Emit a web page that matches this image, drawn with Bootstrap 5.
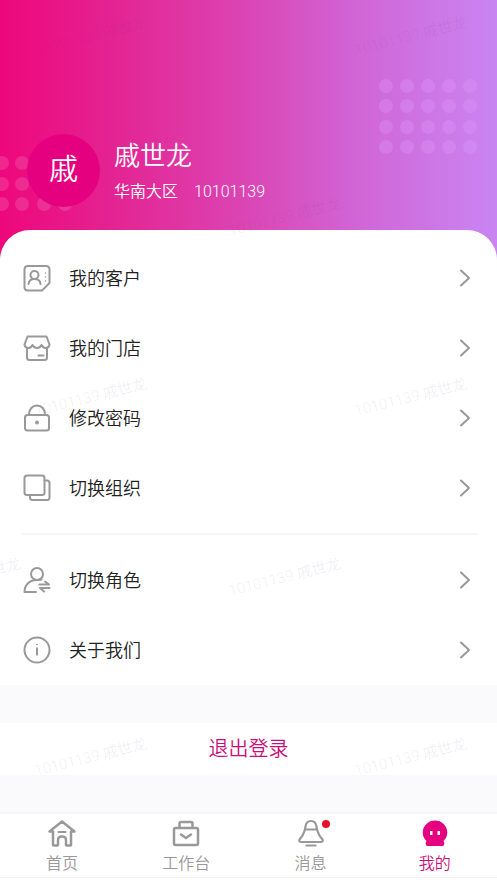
<!DOCTYPE html>
<html lang="zh-CN">
<head>
<meta charset="utf-8">
<meta name="viewport" content="width=device-width, initial-scale=1">
<title>我的</title>
<link href="https://cdn.jsdelivr.net/npm/bootstrap@5.3.0/dist/css/bootstrap.min.css" rel="stylesheet">
<style>
  :root { --brand: #e5007f; --line-icon: #999; }
  body { font-family: Roboto, "Noto Sans CJK SC", sans-serif; font-weight: 350; background: #fafafc; color: #333; }
  svg { display: block; flex: none; }
  .stroke-icon { fill: none; stroke: var(--line-icon); stroke-width: 2; stroke-linejoin: round; stroke-linecap: round; }
  .hero { background: linear-gradient(90deg, #ee077c 0%, #e5208f 20%, #dc43b2 48%, #d165d6 72%, #c985f2 100%); padding: 134px 27px 56px; }
  .dots { fill: #fff; fill-opacity: .13; }
  .dots-left { left: -5px; top: 156px; }
  .dots-right { right: 19px; top: 78px; fill: #e09cff; fill-opacity: .3; }
  .avatar { width: 73px; height: 73px; background: var(--brand); font-size: 29px; }
  .profile { margin-left: 14px; gap: 6px; }
  .profile-name { font-size: 26px; line-height: 36px; font-weight: 350; }
  .profile-info { font-size: 16px; line-height: 24px; gap: 16px; }
  .panel { border-radius: 30px 30px 0 0; margin-top: -33px; padding-top: 13px; }
  .menu-row { height: 70px; padding: 0 26px 0 23px; gap: 18px; font-size: 18px; color: #222; text-decoration: none; }
  .divider { height: 2px; margin: 10px 19px 10px 22px; background: #f5f5f6; }
  .logout { height: 52px; margin-top: 38px; font-size: 20px; font-weight: 350; color: #c8107a; }
  .tabs { border-top: 2px solid #f6f6f7; padding: 5px 0 1px; }
  .tab-link { font-size: 16px; line-height: 24px; gap: 5px; color: #999; text-decoration: none; }
  .tab-link.current { color: #c8107a; }
  .foot-strip { height: 6px; border-top: 1px solid #f3f3f4; }
  .unread { width: 8px; height: 8px; background: #e8112d; top: 1px; right: -5px; }
  .watermark { font-size: 15px; fill: #3c3c78; fill-opacity: .09; pointer-events: none; }
</style>
<script src="https://cdn.jsdelivr.net/npm/bootstrap@5.3.0/dist/js/bootstrap.bundle.min.js"></script>
</head>
<body>
<div class="position-relative overflow-hidden min-vh-100 d-flex flex-column">
  <header class="hero position-relative text-white">
    <svg class="dots dots-left position-absolute" width="78" height="56" aria-hidden="true">
      <g id="dot-row"><circle cx="7" cy="7" r="7"/><circle cx="27" cy="7" r="7"/><circle cx="49" cy="7" r="7"/><circle cx="70" cy="7" r="7"/></g>
      <use href="#dot-row" y="21"/><use href="#dot-row" y="41"/>
    </svg>
    <svg class="dots dots-right position-absolute" width="100" height="78" aria-hidden="true">
      <g id="dot-line"><circle cx="8" cy="8" r="7"/><circle cx="29" cy="8" r="7"/><circle cx="50" cy="8" r="7"/><circle cx="71" cy="8" r="7"/><circle cx="92" cy="8" r="7"/></g>
      <use href="#dot-line" y="20"/><use href="#dot-line" y="41"/><use href="#dot-line" y="61"/>
    </svg>
    <div class="d-flex align-items-center position-relative">
      <div class="avatar rounded-circle d-flex align-items-center justify-content-center">戚</div>
      <div class="profile d-flex flex-column">
        <h1 class="profile-name m-0">戚世龙</h1>
        <div class="profile-info d-flex"><span>华南大区</span><span>10101139</span></div>
      </div>
    </div>
  </header>

  <main>
    <nav class="panel bg-white position-relative" aria-label="菜单">
      <a class="menu-row d-flex align-items-center" href="#customers">
        <svg class="stroke-icon" width="28" height="28" viewBox="0 0 28 28"><path d="M5 2h18q3.500 0 3.500 3.500v13.500l-7.500 7.500H5q-3.500 0-3.500-3.500V5.500Q1.500 2 5 2z"/><circle cx="11.500" cy="11" r="4"/><path d="M5.500 20q.5-5 6-5t6 5"/><path d="M22.500 9v.1M22.500 13v.1M22.500 17v.1" stroke-width="1.500"/></svg>
        <span class="flex-grow-1">我的客户</span>
        <svg class="stroke-icon" width="12" height="18" viewBox="0 0 12 18"><path d="M2 1.500 10 9l-8 7.500"/></svg>
      </a>
      <a class="menu-row d-flex align-items-center" href="#stores">
        <svg class="stroke-icon" width="28" height="28" viewBox="0 0 28 28"><path d="M4.500 2.500h19l3 8q-.5 3.500-4 3.500-2.500 0-4-3-1.500 3-4.500 3t-4.500-3q-1.500 3-4 3-3.500 0-4-3.500z"/><path d="M4 14v9.500q0 2.500 2.500 2.500h15q2.500 0 2.500-2.500V14M15.500 21.500h5"/></svg>
        <span class="flex-grow-1">我的门店</span>
        <svg class="stroke-icon" width="12" height="18" viewBox="0 0 12 18"><path d="M2 1.500 10 9l-8 7.500"/></svg>
      </a>
      <a class="menu-row d-flex align-items-center" href="#password">
        <svg class="stroke-icon" width="28" height="28" viewBox="0 0 28 28"><rect x="2" y="11" width="24" height="15.500" rx="2.500"/><path d="M6 11C6 5 9.500 1.500 14 1.500S22 5 22 11"/><circle cx="14" cy="18.500" r="1.200" fill="#999" stroke-width="1.500"/></svg>
        <span class="flex-grow-1">修改密码</span>
        <svg class="stroke-icon" width="12" height="18" viewBox="0 0 12 18"><path d="M2 1.500 10 9l-8 7.500"/></svg>
      </a>
      <a class="menu-row d-flex align-items-center" href="#organization">
        <svg class="stroke-icon" width="28" height="28" viewBox="0 0 28 28"><rect x="1.500" y="1.500" width="20" height="19.500" rx="2.500"/><path d="M21.500 6.500H24q2.500 0 2.500 2.500v14.500q0 2.500-2.500 2.500H9.500Q7 26 7 23.500V21"/></svg>
        <span class="flex-grow-1">切换组织</span>
        <svg class="stroke-icon" width="12" height="18" viewBox="0 0 12 18"><path d="M2 1.500 10 9l-8 7.500"/></svg>
      </a>
      <div class="divider"></div>
      <a class="menu-row d-flex align-items-center" href="#role">
        <svg class="stroke-icon" width="28" height="28" viewBox="0 0 28 28"><circle cx="14" cy="8" r="6"/><path d="M18.500 13.500Q16.500 14 14 14C6.500 14 1.500 18.500 1.500 26H13"/><path d="M16.500 18.500H26L22 15.500M26.500 22H17l4 3.500"/></svg>
        <span class="flex-grow-1">切换角色</span>
        <svg class="stroke-icon" width="12" height="18" viewBox="0 0 12 18"><path d="M2 1.500 10 9l-8 7.500"/></svg>
      </a>
      <a class="menu-row d-flex align-items-center" href="#about">
        <svg class="stroke-icon" width="28" height="28" viewBox="0 0 28 28"><circle cx="14" cy="14" r="12.500"/><path d="M14 11.500v8" stroke-linecap="butt"/><circle cx="14" cy="8.500" r=".5" stroke-width="1"/></svg>
        <span class="flex-grow-1">关于我们</span>
        <svg class="stroke-icon" width="12" height="18" viewBox="0 0 12 18"><path d="M2 1.500 10 9l-8 7.500"/></svg>
      </a>
    </nav>
    <button type="button" class="logout btn bg-white w-100 border-0 rounded-0 p-0">退出登录</button>
  </main>

  <footer class="mt-auto bg-white">
    <nav class="tabs row g-0 text-center" aria-label="主导航">
      <a class="tab-link col d-flex flex-column align-items-center" href="#home">
        <svg class="stroke-icon" width="28" height="28" viewBox="0 0 28 28"><path d="M14 2.500 1.500 12.500h3.500V26q0 .5.500.5h4q.5 0 .5-.5v-5q0-3.500 4-3.500t4 3.500v5q0 .5.500.5h4q.5 0 .5-.5V12.500h3.500z" stroke-width="2.500"/><path d="M10.500 13h7"/></svg>
        <span>首页</span>
      </a>
      <a class="tab-link col d-flex flex-column align-items-center" href="#work">
        <svg class="stroke-icon" width="28" height="28" viewBox="0 0 28 28"><rect x="2" y="9" width="24" height="17" rx="1.500" stroke-width="2.500"/><path d="M7.500 8.500V4.500Q7.500 3 9 3h10q1.500 0 1.500 1.500v4M9 15.500l5 3.500 5-3.500" stroke-width="2.500"/></svg>
        <span>工作台</span>
      </a>
      <a class="tab-link col d-flex flex-column align-items-center" href="#messages">
        <span class="position-relative">
          <svg class="stroke-icon" width="28" height="28" viewBox="0 0 28 28"><path d="M8.500 8Q9 2 14 2t5.500 6l1 4q1 4 5 8.500 1 2.500-2 2.500h-19q-3 0-2-2.500 4-4.500 5-8.500zM8.500 10.500h11M9.500 26.500h9" stroke-width="2.200"/></svg>
          <span class="unread position-absolute rounded-circle"></span>
        </span>
        <span>消息</span>
      </a>
      <a class="tab-link current col d-flex flex-column align-items-center" href="#me" aria-current="page">
        <svg width="28" height="28" viewBox="0 0 28 28"><path fill="#e5007f" d="M14 1.500A12.300 12.300 0 0 0 1.700 13.500Q1.700 18.500 5.500 22q-1.500 1.500-.5 4 .5 1 1.500 1h15q1 0 1.500-1 1-2.500-.5-4 3.800-3.500 3.800-8.500A12.300 12.300 0 0 0 14 1.500z"/><path fill="#fff" d="M9 12h2.500v4H9zM16.500 12H19v4h-2.500z"/></svg>
        <span>我的</span>
      </a>
    </nav>
    <div class="foot-strip"></div>
  </footer>

  <svg class="watermark position-absolute top-0 start-0 w-100 h-100" text-anchor="middle" aria-hidden="true">
    <text transform="translate(92 41) rotate(-14)">10101139 戚世龙</text>
    <text transform="translate(412 41) rotate(-14)">10101139 戚世龙</text>
    <text transform="translate(286 222) rotate(-14)">10101139 戚世龙</text>
    <text transform="translate(92 402) rotate(-14)">10101139 戚世龙</text>
    <text transform="translate(412 402) rotate(-14)">10101139 戚世龙</text>
    <text transform="translate(-34 582) rotate(-14)">10101139 戚世龙</text>
    <text transform="translate(286 582) rotate(-14)">10101139 戚世龙</text>
    <text transform="translate(92 762) rotate(-14)">10101139 戚世龙</text>
    <text transform="translate(412 762) rotate(-14)">10101139 戚世龙</text>
  </svg>
</div>
</body>
</html>
